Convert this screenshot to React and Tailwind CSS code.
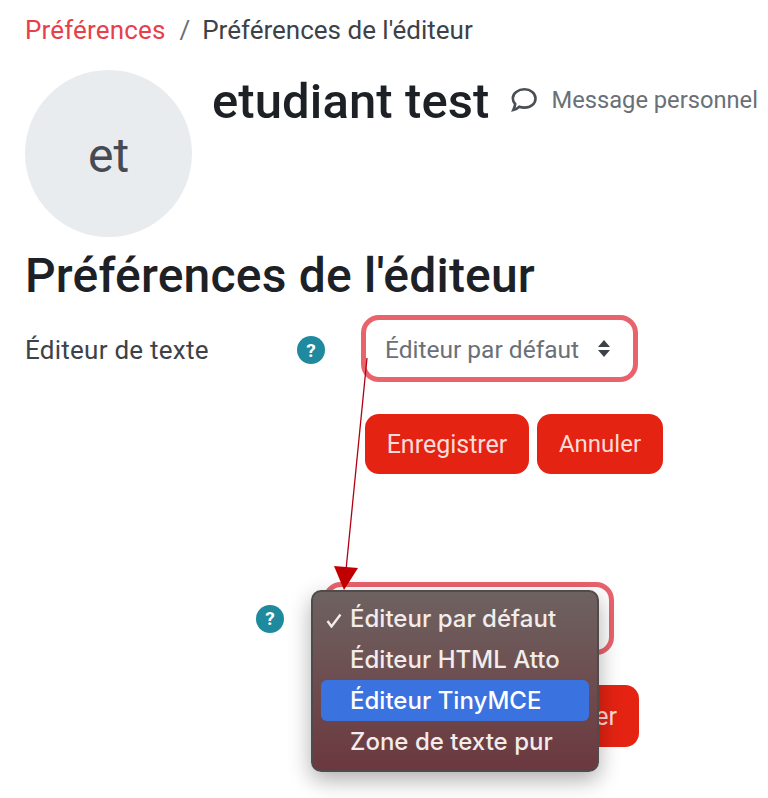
import React from "react";

const sans = "font-['Roboto','Liberation_Sans',sans-serif]";

function Help({ className = "" }) {
  return (
    <span className={`flex h-[28px] w-[28px] shrink-0 items-center justify-center rounded-full bg-[#1f8a9e] text-[19px] font-bold leading-none text-white ${className}`}>
      ?
    </span>
  );
}

function Button({ children, className = "" }) {
  return (
    <div className={`flex items-center justify-center rounded-[14px] bg-[#e52313] leading-none text-[#fbdcd8] ${className}`}>
      {children}
    </div>
  );
}

export default function App() {
  return (
    <div className={`relative h-[798px] w-[768px] overflow-hidden bg-white ${sans}`}>
      <div className="flex flex-col pl-[25px] pt-[16px]">
        <div className="flex h-[28px] items-center text-[26px] leading-none text-[#3d4248]">
          <span className="tracking-[0.15px] text-[#e8404a]">Préférences</span>
          <span className="ml-[14px] text-[#6a7077]">/</span>
          <span className="ml-[12px]">Préférences de l'éditeur</span>
        </div>

        <div className="mt-[26px] flex">
          <div className="flex h-[167px] w-[167px] shrink-0 items-center justify-center rounded-full bg-[#e9ecef] pt-[4px] text-[48px] leading-none text-[#464b52]">
            et
          </div>
          <div className="ml-[20px] flex h-[62px] items-center">
            <span className="text-[49px] font-medium leading-none tracking-[0.1px] text-[#1d2125]">etudiant test</span>
            <svg className="ml-[20px] mt-[-3px]" width="28" height="26" viewBox="0 0 28 26" fill="none" stroke="#4a4f55" strokeWidth="2.600">
              <path d="M14.500 2.300C8 2.300 2.800 6.300 2.800 11.200c0 2.300.9 4.200 2.400 5.800-.2 2-.9 3.900-1.900 6 2.300-.5 4.300-1.700 6-3.300 1.500.6 3.200.9 5.200.9 6.300 0 11-4.100 11-9.200s-4.900-9.100-11-9.100z" />
            </svg>
            <span className="ml-[14px] whitespace-nowrap text-[23.700px] leading-none text-[#6a7077]">Message personnel</span>
          </div>
        </div>

        <div className="mt-[11px] flex h-[56px] items-center text-[48px] font-medium leading-none tracking-[0.2px] text-[#1d2125]">
          Préférences de l'éditeur
        </div>

        <div className="mt-[11px] flex h-[67px] items-center">
          <span className="w-[272px] pt-[3px] text-[26px] leading-none tracking-[0.25px] text-[#3d4248]">Éditeur de texte</span>
          <Help className="mr-[37px] mt-[3px]" />
          <div className="ml-[-1px] flex h-[67px] w-[277px] items-center rounded-[18px] border-[5px] border-[#e9636d] pl-[19px]">
            <span className="pt-[3px] text-[24.500px] leading-none text-[#6a7077]">Éditeur par défaut</span>
            <svg className="ml-[18px]" width="14" height="19" viewBox="0 0 14 19" fill="#3d4248">
              <path d="M7 1 13 8H1z" />
              <path d="M7 18 1 11h12z" />
            </svg>
          </div>
        </div>

        <div className="ml-[340px] mt-[32px] flex gap-[8px]">
          <Button className="h-[60px] w-[164px] text-[25px]">Enregistrer</Button>
          <Button className="h-[60px] w-[126px] text-[24px]">Annuler</Button>
        </div>

        <div className="ml-[231px] mt-[108px] flex h-[73px] items-center">
          <Help />
          <div className="ml-[39px] h-[73px] w-[291px] rounded-[18px] border-[5px] border-[#e9636d]" />
        </div>

        <div className="ml-[500px] mt-[30px] flex">
          <Button className="h-[62px] w-[114px] justify-end pr-[22px] text-[25px]">er</Button>
        </div>
      </div>

      <svg className="pointer-events-none absolute left-0 top-0" width="768" height="798" viewBox="0 0 768 798">
        <line x1="367" y1="358" x2="346" y2="570" stroke="#b00010" strokeWidth="1.300" />
      </svg>

      <div className="absolute left-[311px] top-[590px] flex h-[182px] w-[288px] flex-col rounded-[10px] border-[2px] border-[#4f4b4a] bg-gradient-to-b from-[#6d6261] to-[#6b383f] px-[8px] pt-[6px] font-['Inter','Liberation_Sans',sans-serif] text-[24px] font-medium leading-none tracking-[0.02px] text-[#f2ecea] shadow-[0_8px_22px_rgba(0,0,0,0.32)]">
        <div className="relative flex h-[41px] items-center pl-[29px]">
          <svg className="absolute left-[5px] top-[15px]" width="16" height="15" viewBox="0 0 16 15" fill="none" stroke="#f2ecea" strokeWidth="2.400">
            <path d="m1.500 8 4 5.500L14.500 1.500" />
          </svg>
          Éditeur par défaut
        </div>
        <div className="flex h-[41px] items-center pl-[29px]">Éditeur HTML Atto</div>
        <div className="flex h-[41px] items-center rounded-[6px] bg-[#3a72e0] pl-[29px] text-white">Éditeur TinyMCE</div>
        <div className="flex h-[41px] items-center pl-[29px]">Zone de texte pur</div>
      </div>

      <svg className="pointer-events-none absolute left-0 top-0" width="768" height="798" viewBox="0 0 768 798">
        <path d="M334 566 358 568 344 590z" fill="#c00000" />
      </svg>
    </div>
  );
}
